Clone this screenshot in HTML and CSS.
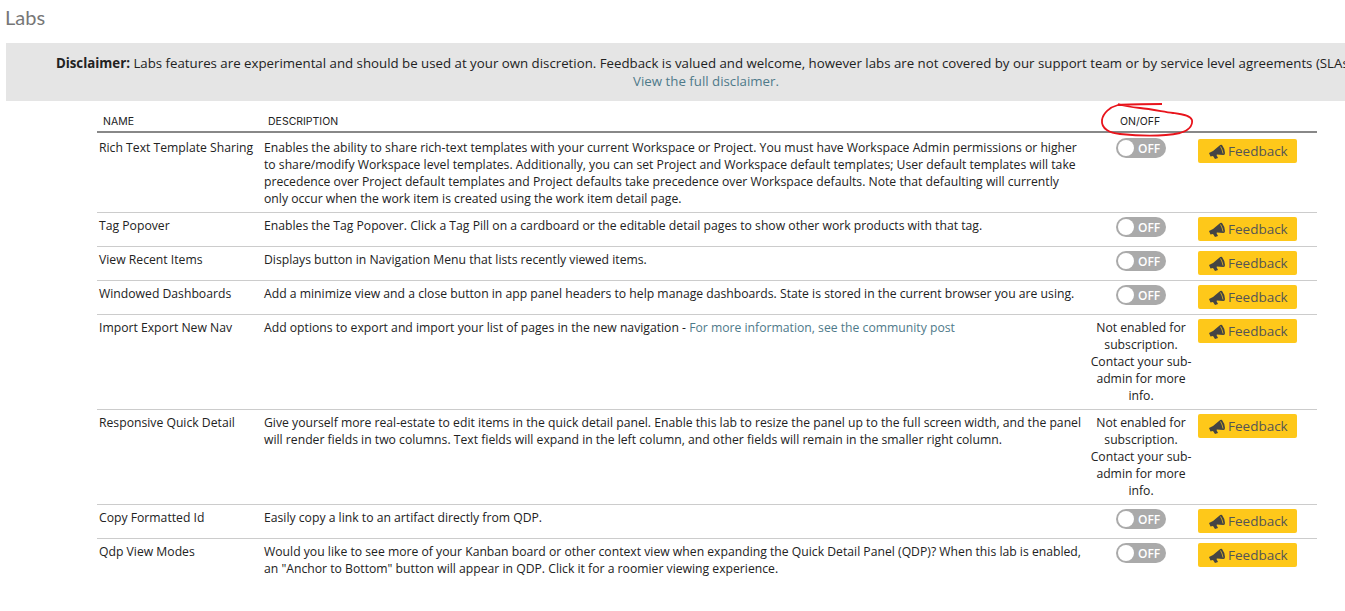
FILE: index.html
```html
<!DOCTYPE html>
<html lang="en">
<head>
<meta charset="utf-8">
<title>Labs</title>
<link rel="stylesheet" href="styles.css">
</head>
<body>
<div class="page">
  <h1 class="title">Labs</h1>
  <div class="banner">
    <div><strong>Disclaimer:</strong> Labs features are experimental and should be used at your own discretion. Feedback is valued and welcome, however labs are not covered by our support team or by service level agreements (SLAs).</div>
    <a class="link" href="#">View the full disclaimer.</a>
  </div>
  <table class="labs">
    <thead>
      <tr><th class="c-name">NAME</th><th class="c-desc">DESCRIPTION</th><th class="c-state">ON/OFF</th><th class="c-fb"></th></tr>
    </thead>
    <tbody>
      <tr class="first">
        <td>Rich Text Template Sharing</td>
        <td class="desc">Enables the ability to share rich-text templates with your current Workspace or Project. You must have Workspace Admin permissions or higher to share/modify Workspace level templates. Additionally, you can set Project and Workspace default templates; User default templates will take precedence over Project default templates and Project defaults take precedence over Workspace defaults. Note that defaulting will currently only occur when the work item is created using the work item detail page.</td>
        <td class="state"><span class="toggle"><i class="knob"></i>OFF</span></td>
        <td><a class="fb" href="#"><svg class="horn" viewBox="0 0 16 15"><path d="M0 9 4 7 10 2Q12 0 13 1 15.500 4 16 9 16 11 14.500 11 11 10.500 8 10.500L7.500 11 9 14 6 15 4 12 1.500 12.500Z"/><path class="glint" d="M11.500 2.500Q13.500 6 14 9.500"/></svg>Feedback</a></td>
      </tr>
      <tr>
        <td>Tag Popover</td>
        <td class="desc">Enables the Tag Popover. Click a Tag Pill on a cardboard or the editable detail pages to show other work products with that tag.</td>
        <td class="state"><span class="toggle"><i class="knob"></i>OFF</span></td>
        <td><a class="fb" href="#"><svg class="horn" viewBox="0 0 16 15"><path d="M0 9 4 7 10 2Q12 0 13 1 15.500 4 16 9 16 11 14.500 11 11 10.500 8 10.500L7.500 11 9 14 6 15 4 12 1.500 12.500Z"/><path class="glint" d="M11.500 2.500Q13.500 6 14 9.500"/></svg>Feedback</a></td>
      </tr>
      <tr>
        <td>View Recent Items</td>
        <td class="desc">Displays button in Navigation Menu that lists recently viewed items.</td>
        <td class="state"><span class="toggle"><i class="knob"></i>OFF</span></td>
        <td><a class="fb" href="#"><svg class="horn" viewBox="0 0 16 15"><path d="M0 9 4 7 10 2Q12 0 13 1 15.500 4 16 9 16 11 14.500 11 11 10.500 8 10.500L7.500 11 9 14 6 15 4 12 1.500 12.500Z"/><path class="glint" d="M11.500 2.500Q13.500 6 14 9.500"/></svg>Feedback</a></td>
      </tr>
      <tr>
        <td>Windowed Dashboards</td>
        <td class="desc">Add a minimize view and a close button in app panel headers to help manage dashboards. State is stored in the current browser you are using.</td>
        <td class="state"><span class="toggle"><i class="knob"></i>OFF</span></td>
        <td><a class="fb" href="#"><svg class="horn" viewBox="0 0 16 15"><path d="M0 9 4 7 10 2Q12 0 13 1 15.500 4 16 9 16 11 14.500 11 11 10.500 8 10.500L7.500 11 9 14 6 15 4 12 1.500 12.500Z"/><path class="glint" d="M11.500 2.500Q13.500 6 14 9.500"/></svg>Feedback</a></td>
      </tr>
      <tr>
        <td>Import Export New Nav</td>
        <td class="desc">Add options to export and import your list of pages in the new navigation - <a class="link" href="#">For more information, see the community post</a></td>
        <td class="state note">Not enabled for subscription. Contact your sub-admin for more info.</td>
        <td><a class="fb" href="#"><svg class="horn" viewBox="0 0 16 15"><path d="M0 9 4 7 10 2Q12 0 13 1 15.500 4 16 9 16 11 14.500 11 11 10.500 8 10.500L7.500 11 9 14 6 15 4 12 1.500 12.500Z"/><path class="glint" d="M11.500 2.500Q13.500 6 14 9.500"/></svg>Feedback</a></td>
      </tr>
      <tr>
        <td>Responsive Quick Detail</td>
        <td class="desc">Give yourself more real-estate to edit items in the quick detail panel. Enable this lab to resize the panel up to the full screen width, and the panel will render fields in two columns. Text fields will expand in the left column, and other fields will remain in the smaller right column.</td>
        <td class="state note">Not enabled for subscription. Contact your sub-admin for more info.</td>
        <td><a class="fb" href="#"><svg class="horn" viewBox="0 0 16 15"><path d="M0 9 4 7 10 2Q12 0 13 1 15.500 4 16 9 16 11 14.500 11 11 10.500 8 10.500L7.500 11 9 14 6 15 4 12 1.500 12.500Z"/><path class="glint" d="M11.500 2.500Q13.500 6 14 9.500"/></svg>Feedback</a></td>
      </tr>
      <tr>
        <td>Copy Formatted Id</td>
        <td class="desc">Easily copy a link to an artifact directly from QDP.</td>
        <td class="state"><span class="toggle"><i class="knob"></i>OFF</span></td>
        <td><a class="fb" href="#"><svg class="horn" viewBox="0 0 16 15"><path d="M0 9 4 7 10 2Q12 0 13 1 15.500 4 16 9 16 11 14.500 11 11 10.500 8 10.500L7.500 11 9 14 6 15 4 12 1.500 12.500Z"/><path class="glint" d="M11.500 2.500Q13.500 6 14 9.500"/></svg>Feedback</a></td>
      </tr>
      <tr class="last">
        <td>Qdp View Modes</td>
        <td class="desc">Would you like to see more of your Kanban board or other context view when expanding the Quick Detail Panel (QDP)? When this lab is enabled, an "Anchor to Bottom" button will appear in QDP. Click it for a roomier viewing experience.</td>
        <td class="state"><span class="toggle"><i class="knob"></i>OFF</span></td>
        <td><a class="fb" href="#"><svg class="horn" viewBox="0 0 16 15"><path d="M0 9 4 7 10 2Q12 0 13 1 15.500 4 16 9 16 11 14.500 11 11 10.500 8 10.500L7.500 11 9 14 6 15 4 12 1.500 12.500Z"/><path class="glint" d="M11.500 2.500Q13.500 6 14 9.500"/></svg>Feedback</a></td>
      </tr>
    </tbody>
  </table>
  <svg class="scribble" viewBox="0 0 100 40" width="100" height="40"><path d="M62 2C50 2 30 2 18 3 10 5 3 11 2 18 1 27 10 31 20 32 40 34 65 34 80 31 88 29 93 24 92 18 90 13 80 12 73 11 60 9 50 7 40 6 30 5 24 4 18 2"/></svg>
</div>
</body>
</html>
```
FILE: styles.css
```css
html, body {
  margin: 0;
  padding: 0;
  background: #fff;
}
.page {
  position: relative;
  width: 1345px;
  height: 611px;
  overflow: hidden;
  font-family: "Open Sans", "Noto Sans", sans-serif;
  font-size: 12.200px;
  line-height: 17px;
  color: #222;
}
.title {
  margin: 0;
  padding: 7px 0 0 5px;
  height: 43px;
  box-sizing: border-box;
  font-family: Lato, sans-serif;
  font-weight: 400;
  font-size: 20px;
  line-height: 20px;
  color: #777;
}
.banner {
  width: 1400px;
  height: 58px;
  margin-left: 6px;
  padding-top: 11px;
  box-sizing: border-box;
  background: #e5e5e5;
  text-align: center;
  font-size: 13.280px;
  line-height: 18px;
  white-space: nowrap;
}
.link {
  color: #4f7a8a;
  text-decoration: none;
}
.labs {
  margin: 0 0 0 97px;
  width: 1220px;
  table-layout: fixed;
  border-collapse: collapse;
}
.labs th {
  height: 31px;
  padding: 0 0 1px 6px;
  box-sizing: border-box;
  vertical-align: bottom;
  border-bottom: 2px solid #888;
  font-family: Inter, sans-serif;
  font-weight: 400;
  font-size: 10.500px;
  text-align: left;
  color: #222;
}
.labs th.c-state { padding-left: 30px; }
.c-name { width: 165px; }
.c-desc { width: 828px; }
.c-state { width: 108px; }
.labs td {
  padding: 4px 2px 5px;
  vertical-align: top;
  border-bottom: 1px solid #ccc;
}
.labs tr.first td { padding-top: 6px; padding-bottom: 5px; }
.labs tr.first .toggle { margin-top: -1px; }
.labs tr.last td { border-bottom: 0; }
.labs td.desc { padding-right: 7px; }
.labs td.state { text-align: center; padding-left: 0; padding-right: 6px; }
.labs td:last-child { padding-left: 0; }
.toggle {
  display: inline-flex;
  align-items: center;
  width: 50px;
  height: 20px;
  padding: 0 2px;
  box-sizing: border-box;
  border-radius: 10px;
  background: #aaa;
  color: #fff;
  font-weight: 600;
  font-size: 12px;
  vertical-align: top;
}
.knob {
  width: 16px;
  height: 16px;
  margin-right: 4px;
  border-radius: 50%;
  background: #fff;
}
.fb {
  display: flex;
  align-items: center;
  width: 99px;
  height: 24px;
  padding-left: 11px;
  box-sizing: border-box;
  border-radius: 2px;
  background: #fec81a;
  color: #555;
  font-size: 13.500px;
  text-decoration: none;
}
.horn {
  width: 16px;
  height: 15px;
  margin-right: 3px;
  fill: #444;
}
.glint {
  fill: none;
  stroke: #fec81a;
  stroke-width: 0.700;
}
.scribble {
  position: absolute;
  left: 1100px;
  top: 102px;
  fill: none;
  stroke: #e8141c;
  stroke-width: 1.800;
}
```
